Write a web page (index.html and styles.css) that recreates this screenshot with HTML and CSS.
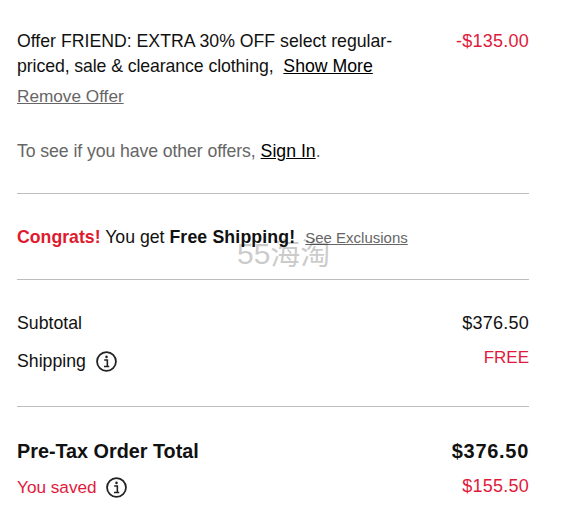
FILE: index.html
```html
<!DOCTYPE html>
<html lang="en">
<head>
<meta charset="utf-8">
<title>Order summary</title>
<link rel="stylesheet" href="styles.css">
</head>
<body>
<main class="summary">
  <section class="offers">
    <div class="row offer-row">
      <div class="offer-text">
        <p class="offer-desc">Offer FRIEND: EXTRA 30% OFF select regular-<span class="tight">priced, sale &amp; clearance clothing,</span> &nbsp;<a class="link-dark" href="#">Show More</a></p>
        <a class="link-grey remove" href="#">Remove Offer</a>
      </div>
      <span class="red amount offer-amount">-$135.00</span>
    </div>
    <p class="signin"><span class="tight">To see if you have other offers,</span> <a class="link-dark" href="#">Sign In</a>.</p>
  </section>
  <section class="shipping">
    <strong class="red-strong">Congrats!</strong> You get <strong class="free-ship">Free Shipping!</strong> <a class="link-grey small" href="#">See Exclusions</a>
    <span class="watermark">55海淘</span>
  </section>
  <section class="costs">
    <div class="row sub-row"><span>Subtotal</span><span class="amount">$376.50</span></div>
    <div class="row ship-row">
      <span class="label">Shipping
        <svg class="info" viewBox="0 0 20 20"><circle cx="10" cy="10" r="9" fill="none" stroke="#222" stroke-width="1.7"/><circle cx="10" cy="5.6" r="1.2" fill="#222"/><path d="M7.8 8.6h3v6M7.6 14.8h5" fill="none" stroke="#222" stroke-width="1.5"/></svg>
      </span>
      <span class="red up free">FREE</span>
    </div>
  </section>
  <section class="totals">
    <div class="row total-row"><strong>Pre-Tax Order Total</strong><strong class="total-amount">$376.50</strong></div>
    <div class="row saved-row">
      <span class="label red">You saved
        <svg class="info" viewBox="0 0 20 20"><circle cx="10" cy="10" r="9" fill="none" stroke="#222" stroke-width="1.7"/><circle cx="10" cy="5.6" r="1.2" fill="#222"/><path d="M7.8 8.6h3v6M7.6 14.8h5" fill="none" stroke="#222" stroke-width="1.5"/></svg>
      </span>
      <span class="red up amount saved-amount">$155.50</span>
    </div>
  </section>
</main>
</body>
</html>
```
FILE: styles.css
```css
html, body { margin: 0; padding: 0; background: #fff; }
body { font-family: "Liberation Sans", Arial, sans-serif; font-size: 17.7px; color: #111; height: 506px; overflow: hidden; }
.summary { width: 512px; margin-left: 17px; }
p { margin: 0; }
.row { display: flex; justify-content: space-between; align-items: flex-start; }
.red { color: #e01a3c; }
.red-strong { color: #e01a2e; }
.tight { letter-spacing: -.09px; }
.amount { letter-spacing: .25px; font-size: 18px; }
.offer-amount { position: relative; top: 2px; }
.free { font-size: 17px; top: -2px; }
.free-ship { letter-spacing: .15px; }
.link-dark { color: #000; text-decoration: underline; }
.link-grey { color: #666; text-decoration: underline; }
.offers { padding-top: 29px; padding-bottom: 29px; border-bottom: 1px solid #bdbdbd; }
.offer-text { width: 385px; }
.offer-desc { line-height: 25px; }
.remove { display: block; line-height: 26px; margin-top: 4px; font-size: 17.2px; }
.signin { color: #666; margin-top: 29px; line-height: 26px; }
.shipping { position: relative; height: 85px; line-height: 86px; border-bottom: 1px solid #bdbdbd; white-space: nowrap; }
.small { font-size: 15px; margin-left: 5px; }
.watermark { position: absolute; left: 220px; top: 44px; font-size: 30px; line-height: 32px; color: #000; opacity: .2; font-family: "Liberation Sans", "Noto Sans CJK SC", sans-serif; }
.costs { padding-top: 30px; padding-bottom: 32px; border-bottom: 1px solid #bdbdbd; }
.sub-row { line-height: 26px; }
.ship-row { margin-top: 12px; line-height: 26px; }
.label { display: flex; align-items: center; gap: 10px; }
.info { width: 21px; height: 21px; }
.up { position: relative; top: -3px; }
.totals { padding-top: 30px; }
.total-row { font-size: 19.8px; line-height: 28px; }
.total-amount { font-size: 20px; letter-spacing: .7px; }
.saved-row { margin-top: 9px; line-height: 26px; }
.saved-row .label { font-size: 17.2px; gap: 9px; }
.saved-amount { top: -1px; }
```
